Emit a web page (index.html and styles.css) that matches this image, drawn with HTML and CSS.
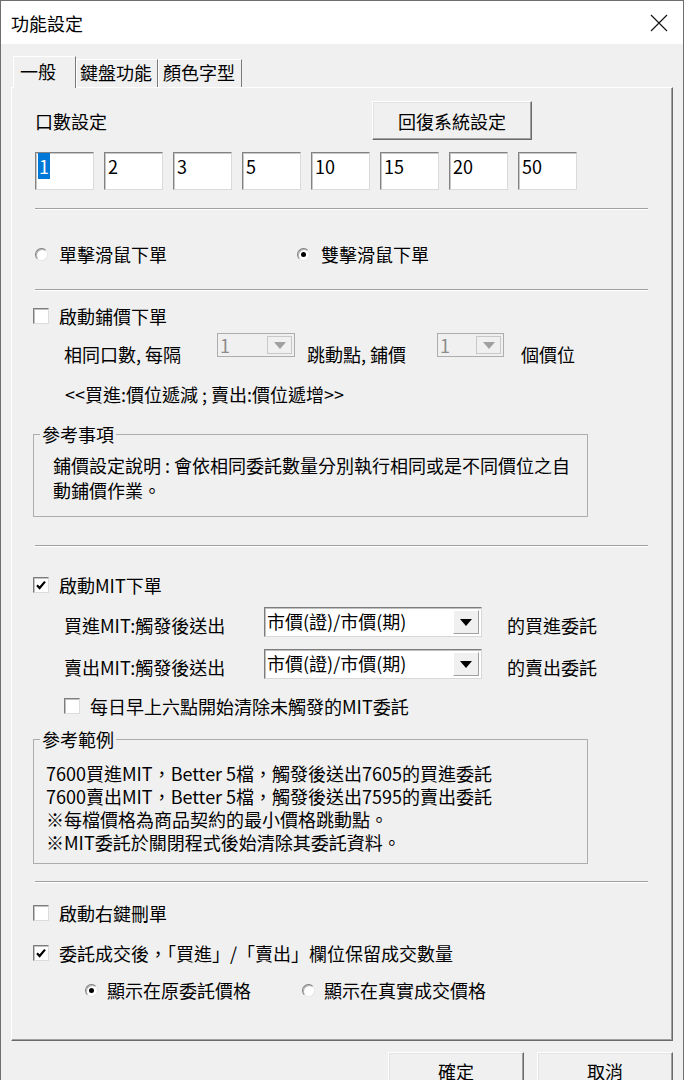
FILE: index.html
```html
<!DOCTYPE html>
<html lang="zh-Hant">
<head>
    <meta charset="UTF-8">
    <meta name="viewport" content="width=device-width, initial-scale=1.0">
    <title>功能設定</title>
    <link rel="stylesheet" href="styles.css">
</head>
<body>
    <div class="dialog">
        <div class="titlebar">
            <span class="title">功能設定</span>
            <svg class="close" width="18" height="18" viewBox="0 0 18 18">
                <path d="M1 1L17 17M17 1L1 17" stroke="#111" stroke-width="1.1" fill="none"/>
            </svg>
        </div>

        <div class="client">
            <div class="tabs">
                <div class="tab active">一般</div>
                <div class="tab">鍵盤功能</div>
                <div class="tab">顏色字型</div>
            </div>

            <div class="panel">
                <!-- 口數 -->
                <div class="lots">
                    <span class="lots-label">口數設定</span>
                    <button class="btn btn-reset">回復系統設定</button>
                </div>
                <div class="edits">
                    <div class="edit"><span class="sel">1</span></div>
                    <div class="edit">2</div>
                    <div class="edit">3</div>
                    <div class="edit">5</div>
                    <div class="edit">10</div>
                    <div class="edit">15</div>
                    <div class="edit">20</div>
                    <div class="edit">50</div>
                </div>
                <div class="sep sep-lots"></div>

                <!-- 滑鼠 -->
                <div class="radios radios-click">
                    <div class="radio-item click-item"><span class="radio"></span><span class="label">單擊滑鼠下單</span></div>
                    <div class="radio-item"><span class="radio checked"></span><span class="label">雙擊滑鼠下單</span></div>
                </div>
                <div class="sep sep-click"></div>

                <!-- 鋪價 -->
                <div class="check-row ladder-check">
                    <span class="check"></span><span class="label">啟動鋪價下單</span>
                </div>
                <div class="combo-row ladder-row">
                    <span class="row-text ladder-text">相同口數, 每隔</span>
                    <div class="combo disabled combo-step"><span class="combo-value">1</span><span class="combo-btn"><span class="arrow"></span></span></div>
                    <span class="row-text tick-text">跳動點, 鋪價</span>
                    <div class="combo disabled combo-count"><span class="combo-value">1</span><span class="combo-btn"><span class="arrow"></span></span></div>
                    <span class="row-text unit-text">個價位</span>
                </div>
                <div class="hint">&lt;&lt;買進:價位遞減 ; 賣出:價位遞增&gt;&gt;</div>
                <fieldset class="group group-note">
                    <legend>參考事項</legend>
                    鋪價設定說明 : 會依相同委託數量分別執行相同或是不同價位之自<br>
                    動鋪價作業。
                </fieldset>
                <div class="sep sep-ladder"></div>

                <!-- MIT -->
                <div class="check-row mit-check">
                    <span class="check checked"><svg width="14" height="14" viewBox="0 0 14 14"><path d="M3 7.2L5.6 10L11 3.6" stroke="#000" stroke-width="2.2" fill="none"/></svg></span><span class="label">啟動MIT下單</span>
                </div>
                <div class="combo-row mit-row mit-buy">
                    <span class="row-text mit-text">買進MIT:觸發後送出</span>
                    <div class="combo combo-mit"><span class="combo-value">市價(證)/市價(期)</span><span class="combo-btn"><span class="arrow"></span></span></div>
                    <span class="row-text mit-tail">的買進委託</span>
                </div>
                <div class="combo-row mit-row mit-sell">
                    <span class="row-text mit-text">賣出MIT:觸發後送出</span>
                    <div class="combo combo-mit"><span class="combo-value">市價(證)/市價(期)</span><span class="combo-btn"><span class="arrow"></span></span></div>
                    <span class="row-text mit-tail">的賣出委託</span>
                </div>
                <div class="check-row daily-check">
                    <span class="check"></span><span class="label">每日早上六點開始清除未觸發的MIT委託</span>
                </div>
                <fieldset class="group group-example">
                    <legend>參考範例</legend>
                    7600買進MIT，Better 5檔，觸發後送出7605的買進委託<br>
                    7600賣出MIT，Better 5檔，觸發後送出7595的賣出委託<br>
                    ※每檔價格為商品契約的最小價格跳動點。<br>
                    ※MIT委託於關閉程式後始清除其委託資料。
                </fieldset>
                <div class="sep sep-mit"></div>

                <!-- 其他 -->
                <div class="check-row rclick-check">
                    <span class="check"></span><span class="label">啟動右鍵刪單</span>
                </div>
                <div class="check-row keep-check">
                    <span class="check checked"><svg width="14" height="14" viewBox="0 0 14 14"><path d="M3 7.2L5.6 10L11 3.6" stroke="#000" stroke-width="2.2" fill="none"/></svg></span><span class="label">委託成交後，「買進」/「賣出」欄位保留成交數量</span>
                </div>
                <div class="radios radios-price">
                    <div class="radio-item price-item"><span class="radio checked"></span><span class="label">顯示在原委託價格</span></div>
                    <div class="radio-item"><span class="radio"></span><span class="label">顯示在真實成交價格</span></div>
                </div>
            </div>

            <div class="actions">
                <button class="btn btn-action btn-ok">確定</button>
                <button class="btn btn-action">取消</button>
            </div>
        </div>
    </div>
</body>
</html>
```

FILE: styles.css
```css
* {
    box-sizing: border-box;
}

body {
    margin: 0;
    background-color: #f0f0f0;
    font-family: "Noto Sans CJK TC", "Noto Sans", sans-serif;
    font-size: 18px;
    line-height: 24px;
    color: #000;
}

.dialog {
    width: 684px;
    height: 1080px;
    border: 1px solid #6e6e6e;
    border-bottom: none;
    background-color: #f0f0f0;
    overflow: hidden;
}

/* title bar */
.titlebar {
    height: 43px;
    background: #fff;
    display: flex;
    align-items: center;
    justify-content: space-between;
    padding: 0 15px 0 10px;
}

.title {
    font-size: 18px;
}

.close {
    display: block;
    margin-top: 1px;
}

/* tabs */
.tabs {
    display: flex;
    align-items: flex-end;
    height: 32px;
    margin: 12px 0 -1px 12px;
    position: relative;
    z-index: 1;
}

.tab {
    height: 28px;
    padding: 0 4px;
    border-top: 1px solid #fff;
    border-left: 1px solid #fff;
    border-right: 1px solid #7a7a7a;
    background: #f0f0f0;
    margin-bottom: 1px;
    white-space: nowrap;
}

.tab.active {
    height: 32px;
    width: 63px;
    padding: 2px 0 0 6px;
    margin-bottom: 0;
}

.tab + .tab {
    margin-left: 0;
    padding-left: 3px;
    width: 82px;
}

.tab:last-child {
    width: 84px;
    padding-left: 4px;
}

/* panel */
.panel {
    height: 954px;
    margin: 0 10px;
    padding-left: 21px;
    border-top: 1px solid #fff;
    border-left: 1px solid #fff;
    border-right: 1px solid #6a6a6a;
    border-bottom: 1px solid #6a6a6a;
    box-shadow: inset -1px -1px 0 #a0a0a0;
    display: flex;
    flex-direction: column;
}

.lots {
    margin-top: 13px;
    height: 39px;
    display: flex;
    align-items: center;
}

.lots-label {
    width: 339px;
    padding-left: 2px;
}

.btn {
    font-family: inherit;
    font-size: 18px;
    color: #000;
    background: #f0f0f0;
    border: 1px solid;
    border-color: #fff #6a6a6a #6a6a6a #fff;
    box-shadow: inset -1px -1px 0 #a0a0a0, inset 1px 1px 0 #e3e3e3;
    padding: 0;
    line-height: 24px;
}

.btn-reset {
    width: 160px;
    height: 39px;
}

.edits {
    margin-top: 12px;
    padding-left: 2px;
    display: flex;
    gap: 10px;
}

.edit {
    width: 59px;
    height: 38px;
    background: #fff;
    border: 1px solid;
    border-color: #828282 #dadada #dadada #828282;
    box-shadow: inset 1px 1px 0 #c8c8c8;
    padding: 2px 0 0 3px;
    line-height: 22px;
}

.sel {
    background: #0078d7;
    color: #fff;
    padding: 0 1px;
    margin-left: -1px;
}

.sep {
    width: 613px;
    height: 2px;
    margin-left: 2px;
    border-top: 1px solid #a0a0a0;
    border-bottom: 1px solid #fff;
}

.sep-lots {
    margin-top: 18px;
}

.sep-click {
    margin-top: 23px;
}

.sep-ladder {
    margin-top: 28px;
}

.sep-mit {
    margin-top: 17px;
}

/* radios */
.radios {
    display: flex;
    height: 24px;
}

.radio-item {
    display: flex;
    align-items: center;
}

.radio {
    width: 13px;
    height: 13px;
    border-radius: 50%;
    border: 1px solid;
    border-color: #7d7d7d #e6e6e6 #e6e6e6 #7d7d7d;
    background: #fff;
    box-shadow: inset 1px 1px 0 #b5b5b5;
    margin-right: 11px;
    display: flex;
    align-items: center;
    justify-content: center;
}

.radio.checked::after {
    content: "";
    width: 5px;
    height: 5px;
    border-radius: 50%;
    background: #000;
}

.radios-click {
    margin-top: 32px;
    padding-left: 2px;
}

.click-item {
    width: 262px;
}

.radios-price {
    margin-top: 13px;
    padding-left: 52px;
}

.price-item {
    width: 217px;
}

.radios-price .radio {
    margin-right: 9px;
}

/* checkboxes */
.check-row {
    display: flex;
    align-items: center;
    height: 24px;
}

.check {
    width: 16px;
    height: 16px;
    background: #fff;
    border: 1px solid;
    border-color: #7d7d7d #dcdcdc #dcdcdc #7d7d7d;
    box-shadow: inset 1px 1px 0 #c0c0c0;
    margin-right: 10px;
    display: flex;
    align-items: center;
    justify-content: center;
}

.ladder-check {
    margin-top: 13px;
}

.mit-check {
    margin-top: 26px;
}

.daily-check {
    margin-top: 15px;
    padding-left: 31px;
}

.rclick-check {
    margin-top: 18px;
}

.keep-check {
    margin-top: 16px;
}

/* combo rows */
.combo-row {
    display: flex;
    align-items: flex-start;
    padding-left: 31px;
}

.row-text {
    white-space: nowrap;
}

.ladder-row {
    margin-top: 5px;
}

.ladder-row .row-text {
    padding-top: 9px;
}

.ladder-text {
    width: 153px;
}

.tick-text {
    width: 130px;
    margin-left: 12px;
}

.unit-text {
    margin-left: 17px;
}

.combo {
    display: flex;
    border: 1px solid;
    background: #fff;
}

.combo-value {
    flex: 1;
    padding-left: 2px;
    line-height: 22px;
    white-space: nowrap;
}

.combo-btn {
    width: 25px;
    display: flex;
    align-items: center;
    justify-content: center;
}

.arrow {
    width: 0;
    height: 0;
    border-left: 6px solid transparent;
    border-right: 6px solid transparent;
    border-top: 7px solid #000;
}

.combo.disabled {
    height: 24px;
    background: #f0f0f0;
    border-color: #adadad;
    color: #8c8c8c;
}

.combo.disabled .combo-btn {
    margin: 2px 2px 2px 0;
    border: 1px solid #c8c8c8;
    background: #f0f0f0;
}

.combo.disabled .arrow {
    border-top-color: #a0a0a0;
}

.combo-step {
    width: 78px;
}

.combo-count {
    width: 67px;
}

.combo-mit {
    width: 218px;
    height: 30px;
    border-color: #7d7d7d #d8d8d8 #d8d8d8 #7d7d7d;
    box-shadow: inset 1px 1px 0 #c0c0c0;
}

.combo-mit .combo-value {
    padding-top: 2px;
}

.combo-mit .combo-btn {
    width: 26px;
    margin: 2px 2px 2px 0;
    background: #f0f0f0;
    border: 1px solid;
    border-color: #fff #a0a0a0 #a0a0a0 #fff;
}

.mit-buy {
    margin-top: 10px;
}

.mit-sell {
    margin-top: 12px;
}

.mit-row .row-text {
    padding-top: 6px;
}

.mit-text {
    width: 200px;
}

.mit-tail {
    margin-left: 25px;
}

.hint {
    margin-top: 16px;
    padding-left: 32px;
}

/* group boxes */
.group {
    width: 555px;
    margin: 0;
    border: 1px solid #adadad;
    min-width: 0;
}

.group legend {
    padding: 0 2px;
}

.group-note {
    margin-top: 16px;
    padding: 6px 0 13px 19px;
    line-height: 25px;
}

.group-note legend {
    margin-left: -13px;
}

.group-example {
    margin-top: 10px;
    padding: 11px 0 9px 12px;
    line-height: 23px;
}

.group-example legend {
    margin-left: -6px;
}

/* dialog buttons */
.actions {
    display: flex;
    justify-content: flex-end;
    gap: 13px;
    margin-top: 11px;
    padding-right: 10px;
}

.btn-action {
    width: 136px;
    height: 38px;
}
```
